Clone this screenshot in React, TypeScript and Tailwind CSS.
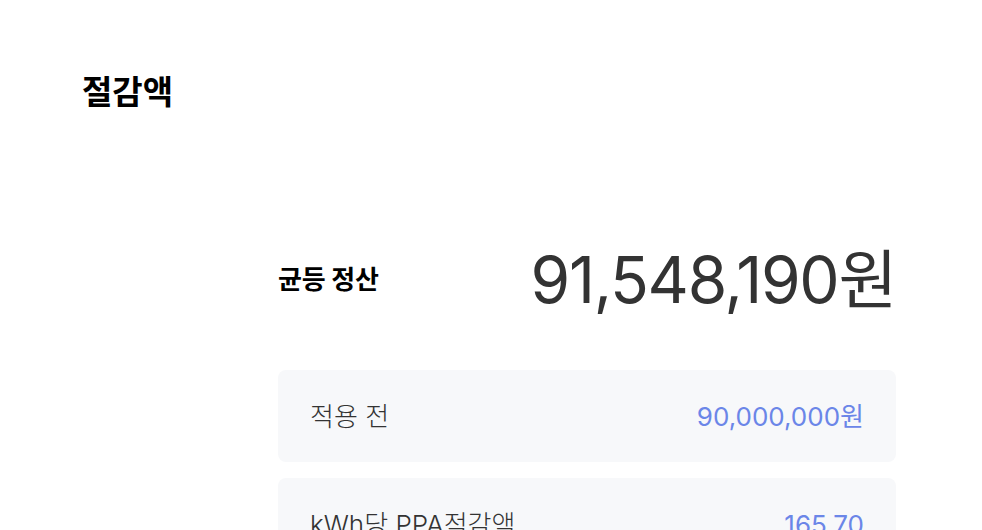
import React from "react";

export default function App() {
  return (
    <div className="w-[982px] h-[530px] bg-white overflow-hidden font-['Inter','Noto_Sans_CJK_KR',sans-serif]">
      <div className="pl-[82px] pt-[72px]">
        <h1 className="text-[33px] leading-[40px] font-bold text-black">절감액</h1>
      </div>
      <div className="ml-[278px] w-[618px] mt-[128px]">
        <div className="flex items-center justify-between h-[80px]">
          <span className="text-[26px] leading-[36px] font-bold text-black tracking-[-0.01em]">균등 정산</span>
          <span className="text-[64px] leading-[80px] text-[#333333] tracking-[-0.02em]">91,548,190원</span>
        </div>
        <div className="mt-[50px] flex flex-col gap-4">
          <div className="h-[92px] rounded-lg bg-[#f7f8fa] px-8 flex items-center justify-between">
            <span className="text-[26px] font-light text-[#333333]">적용 전</span>
            <span className="text-[26px] text-[#6b86e8]">90,000,000원</span>
          </div>
          <div className="h-[92px] rounded-lg bg-[#f7f8fa] px-8 flex items-center justify-between">
            <span className="text-[26px] font-light text-[#333333]">kWh당 PPA적감액</span>
            <span className="text-[26px] text-[#6b86e8]">165.70</span>
          </div>
        </div>
      </div>
    </div>
  );
}
